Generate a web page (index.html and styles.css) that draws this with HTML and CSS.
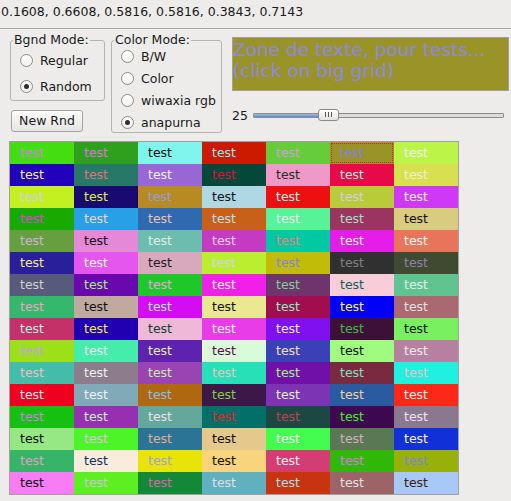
FILE: index.html
```html
<!DOCTYPE html>
<html>
<head>
<meta charset="utf-8">
<link rel="stylesheet" href="styles.css">
</head>
<body>
<div class="status">0.1608, 0.6608, 0.5816, 0.5816, 0.3843, 0.7143</div>
<div class="controls">
  <div class="left-col">
    <fieldset class="group bgnd">
      <legend>Bgnd Mode:</legend>
      <div class="rows spread">
        <div class="radio-row"><span class="radio"></span>Regular</div>
        <div class="radio-row"><span class="radio on"></span>Random</div>
      </div>
    </fieldset>
    <div class="button">New Rnd</div>
  </div>
  <fieldset class="group color">
    <legend>Color Mode:</legend>
    <div class="rows">
      <div class="radio-row"><span class="radio"></span>B/W</div>
      <div class="radio-row"><span class="radio"></span>Color</div>
      <div class="radio-row"><span class="radio"></span>wiwaxia rgb</div>
      <div class="radio-row"><span class="radio on"></span>anapurna</div>
    </div>
  </fieldset>
  <div class="right-col">
    <div class="textzone">Zone de texte, pour tests...<br>(click on big grid)</div>
    <div class="slider-row">
      <span class="value">25</span>
      <div class="track">
        <div class="fill"></div>
        <div class="thumb"><i></i><i></i><i></i></div>
      </div>
    </div>
  </div>
</div>
<div class="grid">
<div class="cell" style="background:#44dd11;color:#d080e0">test</div>
<div class="cell" style="background:#2ea01e;color:#e070e0">test</div>
<div class="cell" style="background:#80f5ee;color:#101010">test</div>
<div class="cell" style="background:#cc1a00;color:#80f0f0">test</div>
<div class="cell" style="background:#66cc3a;color:#d0a0e0">test</div>
<div class="cell selected" style="background:#9a9428;color:#8080e0">test</div>
<div class="cell" style="background:#bcf548;color:#f0f0f0">test</div>

<div class="cell" style="background:#2200bb;color:#f0f080">test</div>
<div class="cell" style="background:#287868;color:#e07080">test</div>
<div class="cell" style="background:#9966d6;color:#f0f0f0">test</div>
<div class="cell" style="background:#034838;color:#e01040">test</div>
<div class="cell" style="background:#f098c8;color:#203020">test</div>
<div class="cell" style="background:#e80a48;color:#a0f0e0">test</div>
<div class="cell" style="background:#d8e050;color:#f0f0d0">test</div>

<div class="cell" style="background:#c4f022;color:#d0d0e0">test</div>
<div class="cell" style="background:#180a70;color:#e0f040">test</div>
<div class="cell" style="background:#b88a22;color:#90a0e0">test</div>
<div class="cell" style="background:#b0d8e4;color:#101010">test</div>
<div class="cell" style="background:#ee1010;color:#c0f0f0">test</div>
<div class="cell" style="background:#b8cc3a;color:#d0d0e0">test</div>
<div class="cell" style="background:#d038f8;color:#f0f0f0">test</div>

<div class="cell" style="background:#18aa00;color:#e040e0">test</div>
<div class="cell" style="background:#28a0e8;color:#f0d0c0">test</div>
<div class="cell" style="background:#2f6ab0;color:#f0c0b0">test</div>
<div class="cell" style="background:#c8601a;color:#b0e0f0">test</div>
<div class="cell" style="background:#58f298;color:#f0f0f0">test</div>
<div class="cell" style="background:#9c3462;color:#a0e0c0">test</div>
<div class="cell" style="background:#d8cc80;color:#101010">test</div>

<div class="cell" style="background:#66a03e;color:#d0b0e0">test</div>
<div class="cell" style="background:#e688d8;color:#101010">test</div>
<div class="cell" style="background:#6cbcb0;color:#e0f0e0">test</div>
<div class="cell" style="background:#c43ac0;color:#f0d0f0">test</div>
<div class="cell" style="background:#00c8a0;color:#f08080">test</div>
<div class="cell" style="background:#e41ee8;color:#e0f0c0">test</div>
<div class="cell" style="background:#e8745c;color:#f8f8f8">test</div>

<div class="cell" style="background:#2a1f9a;color:#f0f080">test</div>
<div class="cell" style="background:#e456ee;color:#f8f8f8">test</div>
<div class="cell" style="background:#d8a8bc;color:#202020">test</div>
<div class="cell" style="background:#bcee30;color:#d0d0f0">test</div>
<div class="cell" style="background:#c0bc08;color:#8080e8">test</div>
<div class="cell" style="background:#303030;color:#808080">test</div>
<div class="cell" style="background:#404a30;color:#9080b0">test</div>

<div class="cell" style="background:#585a7c;color:#d0d0d0">test</div>
<div class="cell" style="background:#6a08b0;color:#a0f080">test</div>
<div class="cell" style="background:#1ec82a;color:#f0a0e0">test</div>
<div class="cell" style="background:#f020e8;color:#f0f0f0">test</div>
<div class="cell" style="background:#6e346c;color:#80d090">test</div>
<div class="cell" style="background:#f8ccd8;color:#106050">test</div>
<div class="cell" style="background:#60c490;color:#e0f0f0">test</div>

<div class="cell" style="background:#34b86e;color:#f0a0c0">test</div>
<div class="cell" style="background:#c0aaa0;color:#101010">test</div>
<div class="cell" style="background:#d40cf4;color:#a0f0d0">test</div>
<div class="cell" style="background:#eae890;color:#101010">test</div>
<div class="cell" style="background:#a00e50;color:#80f0c0">test</div>
<div class="cell" style="background:#0000f8;color:#f8f840">test</div>
<div class="cell" style="background:#aa6870;color:#e0e0e8">test</div>

<div class="cell" style="background:#c43068;color:#b0f0e0">test</div>
<div class="cell" style="background:#2000b0;color:#f0f040">test</div>
<div class="cell" style="background:#f0b8d8;color:#104030">test</div>
<div class="cell" style="background:#e83ce8;color:#f0f0f0">test</div>
<div class="cell" style="background:#8010f0;color:#e0f0e0">test</div>
<div class="cell" style="background:#3c1038;color:#40b840">test</div>
<div class="cell" style="background:#78f060;color:#101010">test</div>

<div class="cell" style="background:#9ce018;color:#c0a0f0">test</div>
<div class="cell" style="background:#44eeaa;color:#f0e0f0">test</div>
<div class="cell" style="background:#5e22ae;color:#e0f0a0">test</div>
<div class="cell" style="background:#d8fcd8;color:#600850">test</div>
<div class="cell" style="background:#3c40b8;color:#f0e0b0">test</div>
<div class="cell" style="background:#a0fc80;color:#101010">test</div>
<div class="cell" style="background:#b880a0;color:#f0e8f0">test</div>

<div class="cell" style="background:#44bcaa;color:#f0c0c0">test</div>
<div class="cell" style="background:#8c7c8c;color:#f0f0f0">test</div>
<div class="cell" style="background:#9a44b4;color:#c0f0a0">test</div>
<div class="cell" style="background:#28e0b8;color:#f0c0c0">test</div>
<div class="cell" style="background:#7010a8;color:#a0f080">test</div>
<div class="cell" style="background:#7a2a40;color:#80e0c0">test</div>
<div class="cell" style="background:#20f0e0;color:#f0c0c0">test</div>

<div class="cell" style="background:#f00020;color:#c0f0f0">test</div>
<div class="cell" style="background:#80aab8;color:#f0f0f0">test</div>
<div class="cell" style="background:#b06810;color:#80c0f0">test</div>
<div class="cell" style="background:#3c1848;color:#80d040">test</div>
<div class="cell" style="background:#7c34b4;color:#e0f0c0">test</div>
<div class="cell" style="background:#2a5aa0;color:#f0d0a0">test</div>
<div class="cell" style="background:#fc2818;color:#e0f0f0">test</div>

<div class="cell" style="background:#16c010;color:#d080e0">test</div>
<div class="cell" style="background:#9630b0;color:#c0f0c0">test</div>
<div class="cell" style="background:#64a89c;color:#f0e0e0">test</div>
<div class="cell" style="background:#007068;color:#f02020">test</div>
<div class="cell" style="background:#1c4844;color:#c04050">test</div>
<div class="cell" style="background:#3e0850;color:#40f020">test</div>
<div class="cell" style="background:#8a7890;color:#f0e0f0">test</div>

<div class="cell" style="background:#96e884;color:#101010">test</div>
<div class="cell" style="background:#4cf428;color:#e0c0e0">test</div>
<div class="cell" style="background:#2c7496;color:#e0b090">test</div>
<div class="cell" style="background:#e4c88c;color:#101010">test</div>
<div class="cell" style="background:#44fc50;color:#f8f8f8">test</div>
<div class="cell" style="background:#5a7854;color:#d0b0c0">test</div>
<div class="cell" style="background:#1230d8;color:#f8f0b0">test</div>

<div class="cell" style="background:#36b468;color:#e0a0c0">test</div>
<div class="cell" style="background:#faecdc;color:#103060">test</div>
<div class="cell" style="background:#e8e408;color:#a0a0e0">test</div>
<div class="cell" style="background:#f8d47c;color:#101010">test</div>
<div class="cell" style="background:#d43c74;color:#f0f0f0">test</div>
<div class="cell" style="background:#30b808;color:#e070f0">test</div>
<div class="cell" style="background:#98b008;color:#8080e0">test</div>

<div class="cell" style="background:#f87cf4;color:#101010">test</div>
<div class="cell" style="background:#5cf020;color:#d0c0e0">test</div>
<div class="cell" style="background:#128838;color:#e060b0">test</div>
<div class="cell" style="background:#60b0c0;color:#e0e0e0">test</div>
<div class="cell" style="background:#c83410;color:#a0e0f0">test</div>
<div class="cell" style="background:#9c6468;color:#e0e0e0">test</div>
<div class="cell" style="background:#a8c8f8;color:#402010">test</div>
</div>
</body>
</html>
```

FILE: styles.css
```css
html, body {
  margin: 0;
  padding: 0;
  background: #edeceb;
}
body {
  font-family: "DejaVu Sans", "Liberation Sans", sans-serif;
  font-size: 12.5px;
  color: #1a1a1a;
  width: 511px;
  height: 501px;
  overflow: hidden;
}
.status {
  height: 29px;
  line-height: 24px;
  padding-left: 1px;
  border-bottom: 1px solid #a9a7a5;
  box-sizing: border-box;
}
.controls {
  display: flex;
  align-items: flex-start;
  padding: 4px 0 0 10px;
  height: 107px;
  box-sizing: border-box;
}
.left-col {
  display: flex;
  flex-direction: column;
  width: 95px;
  gap: 9px;
}
.group {
  margin: 0;
  padding: 0;
  border: 1px solid #b6b4b1;
  border-radius: 3px;
  min-width: 0;
}
.group legend {
  padding: 0 1px;
  margin-left: 2px;
  line-height: 14px;
  height: 14px;
}
.bgnd {
  width: 95px;
  box-sizing: border-box;
}
.color {
  width: 111px;
  box-sizing: border-box;
  margin-left: 6px;
}
.rows {
  display: flex;
  flex-direction: column;
  gap: 4px;
  padding: 0 0 1px 9px;
}
.rows.spread {
  height: 53px;
  gap: 0;
  padding-bottom: 0;
  box-sizing: border-box;
}
.rows.spread .radio-row {
  flex: 1;
}
.radio-row {
  display: flex;
  align-items: center;
  height: 18px;
  gap: 7px;
  white-space: nowrap;
}
.radio {
  position: relative;
  width: 11px;
  height: 11px;
  border-radius: 50%;
  border: 1px solid #8e8c8a;
  background: linear-gradient(#ffffff, #f2f1f0);
  flex: none;
}
.radio.on::after {
  content: "";
  position: absolute;
  left: 3px;
  top: 3px;
  width: 5px;
  height: 5px;
  border-radius: 50%;
  background: #2e2e2e;
}
.button {
  width: 72px;
  height: 22px;
  box-sizing: border-box;
  border: 1px solid #a5a3a0;
  border-radius: 3px;
  background: linear-gradient(#fbfbfa, #e6e5e3);
  text-align: center;
  line-height: 20px;
  margin-left: 1px;
}
.right-col {
  display: flex;
  flex-direction: column;
  margin-left: 10px;
  padding-top: 4px;
}
.textzone {
  width: 277px;
  height: 54px;
  box-sizing: border-box;
  border: 1px solid #a3a19c;
  background: #9a9428;
  color: #8a88e6;
  font-size: 18.5px;
  line-height: 21px;
  padding: 1px 0 0 0;
  white-space: nowrap;
  overflow: hidden;
}
.slider-row {
  display: flex;
  align-items: center;
  height: 22px;
  margin-top: 13px;
}
.value {
  width: 21px;
  flex: none;
}
.track {
  position: relative;
  width: 251px;
  height: 5px;
  box-sizing: border-box;
  border: 1px solid #8f8d8b;
  border-radius: 1px;
  background: #dddcdb;
}
.fill {
  width: 66px;
  height: 100%;
  background: linear-gradient(#9dbbe3, #5f8cc8);
}
.thumb {
  position: absolute;
  left: 64px;
  top: -5px;
  width: 21px;
  height: 12px;
  box-sizing: border-box;
  border: 1px solid #8d8b89;
  border-radius: 3px;
  background: linear-gradient(#ffffff, #e4e3e1);
  display: flex;
  justify-content: center;
  align-items: center;
  gap: 2px;
}
.thumb i {
  display: block;
  width: 1px;
  height: 5px;
  background: #555;
}
.grid {
  display: grid;
  grid-template-columns: repeat(7, 64px);
  grid-auto-rows: 22px;
  width: 448px;
  border: 1px solid #a2a09d;
  margin: 5px 0 0 9px;
}
.cell {
  padding-left: 10px;
  line-height: 22px;
  white-space: nowrap;
}
.cell.selected {
  outline: 1px dotted #ff1010;
  outline-offset: -2px;
}
```
